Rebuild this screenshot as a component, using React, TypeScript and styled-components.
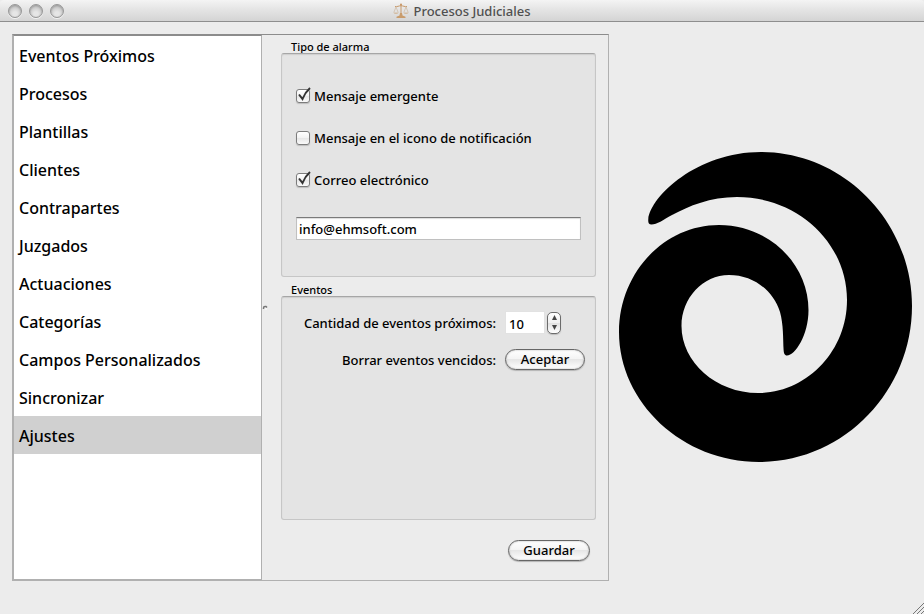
import React, { useState } from "react";
import styled, { createGlobalStyle } from "styled-components";

const GlobalStyle = createGlobalStyle`
  *, *::before, *::after { box-sizing: border-box; }
  body {
    margin: 0;
    background: #ececec;
    color: #000;
    font: 500 13px/16px "Noto Sans", "Open Sans", sans-serif;
  }
  button, input { font: inherit; color: inherit; margin: 0; }
`;

const Window = styled.div`
  display: flex;
  flex-direction: column;
  min-height: 100vh;
`;

const TitleBar = styled.header`
  display: grid;
  grid-template-columns: 1fr auto 1fr;
  align-items: center;
  height: 22px;
  padding: 0 8px;
  background: linear-gradient(#f4f4f4, #e6e6e6 40%, #d4d4d4);
  border-bottom: 1px solid #8e8e8e;
  border-radius: 4px 4px 0 0;
`;

const Lights = styled.div`
  display: flex;
  gap: 7px;
`;

const Light = styled.button`
  width: 14px;
  height: 14px;
  padding: 0;
  border: 1px solid #979797;
  border-radius: 50%;
  background: radial-gradient(circle at 50% 75%, #e6e6e6 20%, #c4c4c4 75%);
  box-shadow: inset 0 1px 2px #9a9a9a, 0 1px 0 #f2f2f2;
`;

const Title = styled.h1`
  display: flex;
  align-items: center;
  gap: 4px;
  margin: 0;
  color: #505050;
  font-size: 13px;
  font-weight: 500;
`;

const Body = styled.main`
  flex: 1;
  display: flex;
  gap: 10px;
  padding: 12px 12px 0;
`;

const Frame = styled.div`
  flex: 1;
  display: flex;
  min-width: 0;
  border: 1px solid #b0b0b0;
  border-top-color: #8c8c8c;
`;

const Sidebar = styled.nav`
  width: 249px;
  border: 1px solid #b0b0b0;
  border-top-color: #8c8c8c;
  background: #fff;
`;

const NavList = styled.ul`
  margin: 0;
  padding: 0;
  list-style: none;
`;

const NavItem = styled.button<{ $active: boolean }>`
  display: block;
  width: 100%;
  height: 38px;
  padding: 2px 5px 0;
  border: 0;
  background: ${(p) => (p.$active ? "#d0d0d0" : "transparent")};
  font-size: 16px;
  line-height: 24px;
  text-align: left;
`;

const Splitter = styled.div`
  display: flex;
  align-items: center;
  width: 7px;
`;

const Settings = styled.form`
  flex: 1;
  display: flex;
  flex-direction: column;
  gap: 6px;
  min-width: 0;
  padding: 5px 12px 19px;
`;

const Group = styled.section`
  flex: 1;
  display: flex;
  flex-direction: column;
`;

const GroupTitle = styled.h2`
  margin: 0;
  padding: 0 10px;
  font-size: 11px;
  line-height: 13px;
  font-weight: 500;
`;

const GroupBox = styled.div`
  flex: 1;
  border: 1px solid #c6c6c6;
  border-top-color: #a6a6a6;
  border-radius: 3px;
  background: #e4e4e4;
  box-shadow: inset 0 1px 1px #cecece;
`;

const AlarmFields = styled.div`
  display: flex;
  flex-direction: column;
  gap: 26px;
  padding: 34px 14px;
`;

const Check = styled.label`
  display: flex;
  align-items: center;
  gap: 4px;
`;

const CheckMark = styled.span`
  position: relative;
  display: flex;

  input {
    appearance: none;
    width: 14px;
    height: 14px;
    border: 1px solid #7c7c7c;
    border-radius: 3px;
    background: linear-gradient(#fff, #f2f2f2 50%, #e6e6e6 50%, #fafafa);
    box-shadow: 0 1px 1px #bdbdbd;
  }
  svg {
    position: absolute;
    left: 0;
    bottom: 0;
    pointer-events: none;
    visibility: hidden;
  }
  input:checked + svg { visibility: visible; }
`;

const TextField = styled.input`
  width: 100%;
  height: 23px;
  padding: 0 2px;
  border: 1px solid #c0c0c0;
  border-top-color: #7a7a7a;
  border-radius: 0;
  background: #fff;
  box-shadow: inset 0 1px 1px #dcdcdc;
  outline: 0;
`;

const MailRow = styled.div`
  padding-top: 3px;
`;

const EventFields = styled.div`
  display: grid;
  grid-template-columns: 1fr 80px;
  gap: 15px 9px;
  align-items: center;
  padding: 14px 10px;

  label, span { text-align: right; }
`;

const Spin = styled.div`
  display: flex;
  align-items: center;
  gap: 2px;
`;

const NumberField = styled.input`
  appearance: textfield;
  width: 40px;
  height: 23px;
  padding: 2px 3px 0;
  border: 1px solid #e2e2e2;
  background: #fff;
  outline: 0;
  &::-webkit-inner-spin-button { appearance: none; }
`;

const Stepper = styled.div`
  display: flex;
  flex-direction: column;
  width: 14px;
  height: 22px;
  border: 1px solid #6c6c6c;
  border-radius: 5px;
  background: linear-gradient(#fff, #efefef 50%, #e0e0e0 50%, #fff);
  box-shadow: 0 1px 1px #bcbcbc;
`;

const StepButton = styled.button`
  flex: 1;
  display: flex;
  align-items: center;
  justify-content: center;
  padding: 0;
  border: 0;
  background: none;
`;

const PushButton = styled.button`
  width: 80px;
  height: 21px;
  padding: 0 0 2px;
  border: 1px solid #666;
  border-radius: 11px;
  background: linear-gradient(#fff, #f4f4f4 45%, #e6e6e6 50%, #fff);
  box-shadow: 0 1px 1px #b4b4b4, inset 0 0 2px #aaa;
  line-height: 16px;
`;

const Actions = styled.div`
  display: flex;
  justify-content: flex-end;
  padding: 14px 6px 0;

  ${PushButton} { width: 82px; }
`;

const Brand = styled.aside`
  width: 293px;
  display: flex;
  align-items: center;
  padding-bottom: 2px;
  svg { width: 100%; height: auto; }
`;

const StatusBar = styled.footer`
  display: flex;
  align-items: flex-end;
  justify-content: flex-end;
  height: 33px;
`;

const Scales = () => (
  <svg width="16" height="16" viewBox="0 0 16 16" fill="none" aria-hidden="true">
    <path d="M8 1v12M2 3.5c2 .6 4-.8 6-.8s4 1.400 6 .8" stroke="#c79a6c" strokeWidth="1" />
    <path d="M3 4 .8 9.500M3 4l2.200 5.500M13 4l-2.200 5.500M13 4l2.200 5.500" stroke="#cdb8a0" strokeWidth=".7" />
    <path d="M.5 9.500h5c-.5 2-4.500 2-5 0ZM10.500 9.500h5c-.5 2-4.500 2-5 0Z" fill="#d3bda4" />
    <path d="M7 10h2l.5 2.500 3 1.300V15h-9v-1.200l3-1.300Z" fill="#c99c6c" />
    <circle cx="8" cy="1.500" r="1" fill="#c99663" />
  </svg>
);

const Spiral = () => (
  <svg viewBox="619 152 293 310" role="img" aria-label="Logo">
    <path d="M761 152 C844 152 912 222 912 306 C912 391 844 462 759 462 C683 462 619 403 619 332 C619 273 664 225 719 225 C769 225 808.500 264 808.500 310 C808.500 335 795 355.500 787 355.500 C784.500 355.500 783.800 353 783.600 350 C783 338 783.500 325 780 312 C773 290 753 275 729 275 C703 275 681.500 298 681.500 326 C681.500 362 716 393 758 393 C807 393 847 351 847 300 C847 243 798 197 737 197 C710 197 689 206 672 215 C663 220 657 224.500 651.500 224.500 C648.500 224.500 648 222 648.300 219 C651 196 697 152 761 152 Z" />
  </svg>
);

const sections = [
  "Eventos Próximos", "Procesos", "Plantillas", "Clientes", "Contrapartes", "Juzgados",
  "Actuaciones", "Categorías", "Campos Personalizados", "Sincronizar", "Ajustes",
];

const alarms = [
  { label: "Mensaje emergente", on: true },
  { label: "Mensaje en el icono de notificación", on: false },
  { label: "Correo electrónico", on: true },
];

export default function App() {
  const [section, setSection] = useState("Ajustes");
  const [count, setCount] = useState(10);

  return (
    <Window>
      <GlobalStyle />
      <TitleBar>
        <Lights>
          <Light aria-label="Cerrar" />
          <Light aria-label="Minimizar" />
          <Light aria-label="Ampliar" />
        </Lights>
        <Title><Scales />Procesos Judiciales</Title>
      </TitleBar>
      <Body>
        <Frame>
          <Sidebar>
            <NavList>
              {sections.map((name) => (
                <li key={name}>
                  <NavItem $active={name === section} onClick={() => setSection(name)}>{name}</NavItem>
                </li>
              ))}
            </NavList>
          </Sidebar>
          <Splitter>
            <svg width="6" height="6" viewBox="0 0 6 6" fill="none" aria-hidden="true">
              <path d="M1.500 4V3q0-1.500 1.500-1.500h1l1 1" stroke="#777" strokeWidth="1.500" />
              <path d="M3 4h2" stroke="#fff" />
            </svg>
          </Splitter>
          <Settings onSubmit={(e) => e.preventDefault()}>
            <Group>
              <GroupTitle>Tipo de alarma</GroupTitle>
              <GroupBox>
                <AlarmFields>
                  {alarms.map((a) => (
                    <Check key={a.label}>
                      <CheckMark>
                        <input type="checkbox" defaultChecked={a.on} />
                        <svg width="15" height="16" viewBox="0 0 15 16" fill="none" aria-hidden="true">
                          <path d="M3 7.500 6.500 12Q9 5.500 14 1" stroke="#333" strokeWidth="2" />
                        </svg>
                      </CheckMark>
                      {a.label}
                    </Check>
                  ))}
                  <MailRow>
                    <TextField type="email" aria-label="Correo electrónico" defaultValue="info@ehmsoft.com" />
                  </MailRow>
                </AlarmFields>
              </GroupBox>
            </Group>
            <Group>
              <GroupTitle>Eventos</GroupTitle>
              <GroupBox>
                <EventFields>
                  <label htmlFor="count">Cantidad de eventos próximos:</label>
                  <Spin>
                    <NumberField id="count" type="number" value={count} onChange={(e) => setCount(Number(e.target.value))} />
                    <Stepper>
                      <StepButton type="button" aria-label="Aumentar" onClick={() => setCount(count + 1)}>
                        <svg width="5" height="5" viewBox="0 0 5 5" fill="#444"><path d="M2.500 0 5 5H0Z" /></svg>
                      </StepButton>
                      <StepButton type="button" aria-label="Disminuir" onClick={() => setCount(count - 1)}>
                        <svg width="5" height="5" viewBox="0 0 5 5" fill="#444"><path d="M0 0h5L2.500 5Z" /></svg>
                      </StepButton>
                    </Stepper>
                  </Spin>
                  <span id="purge">Borrar eventos vencidos:</span>
                  <PushButton type="button" aria-describedby="purge">Aceptar</PushButton>
                </EventFields>
              </GroupBox>
            </Group>
            <Actions>
              <PushButton type="submit">Guardar</PushButton>
            </Actions>
          </Settings>
        </Frame>
        <Brand><Spiral /></Brand>
      </Body>
      <StatusBar>
        <svg width="12" height="12" viewBox="0 0 12 12" stroke="#777" aria-hidden="true">
          <path d="M1 12 12 1M5 12l7-7M9 12l3-3" />
        </svg>
      </StatusBar>
    </Window>
  );
}
